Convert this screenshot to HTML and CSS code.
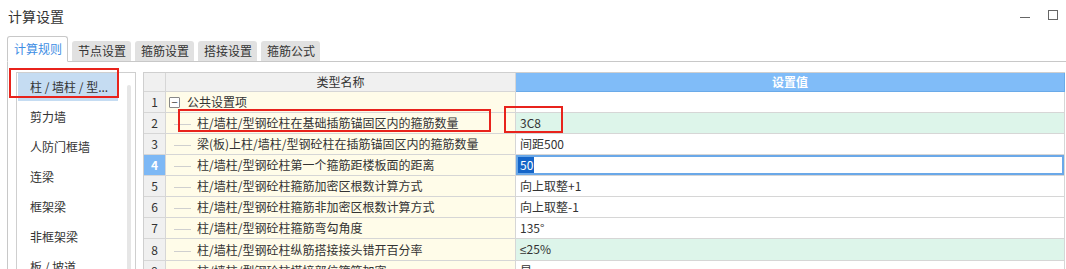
FILE: index.html
```html
<!DOCTYPE html>
<html lang="zh-CN">

<head>
  <meta charset="UTF-8">
  <title>计算设置</title>
  <link rel="stylesheet" href="styles.css">
</head>

<body>
  <div class="window">
    <div class="titlebar">
      <span class="title">计算设置</span>
      <div class="win-btns">
        <span class="btn-min"></span>
        <span class="btn-max"></span>
      </div>
    </div>

    <div class="tabs">
      <div class="tab active">计算规则</div>
      <div class="tab">节点设置</div>
      <div class="tab">箍筋设置</div>
      <div class="tab">搭接设置</div>
      <div class="tab">箍筋公式</div>
    </div>

    <div class="tab-pane">
      <div class="side-list">
        <ul class="items">
          <li class="selected">柱 / 墙柱 / 型...</li>
          <li>剪力墙</li>
          <li>人防门框墙</li>
          <li>连梁</li>
          <li>框架梁</li>
          <li>非框架梁</li>
          <li>板 / 坡道</li>
        </ul>
        <div class="scrollbar"><div class="thumb"></div></div>
      </div>

      <table class="grid">
        <colgroup>
          <col class="c-num">
          <col class="c-name">
          <col>
        </colgroup>
        <thead>
          <tr>
            <th class="num"></th>
            <th class="name-head">类型名称</th>
            <th class="value-head">设置值</th>
          </tr>
        </thead>
        <tbody>
          <tr>
            <td class="num">1</td>
            <td class="name"><span class="toggle">−</span>公共设置项</td>
            <td class="value"></td>
          </tr>
          <tr>
            <td class="num">2</td>
            <td class="name"><span class="branch"></span>柱/墙柱/型钢砼柱在基础插筋锚固区内的箍筋数量</td>
            <td class="value green">3C8</td>
          </tr>
          <tr>
            <td class="num">3</td>
            <td class="name"><span class="branch"></span>梁(板)上柱/墙柱/型钢砼柱在插筋锚固区内的箍筋数量</td>
            <td class="value">间距500</td>
          </tr>
          <tr class="current">
            <td class="num">4</td>
            <td class="name"><span class="branch"></span>柱/墙柱/型钢砼柱第一个箍筋距楼板面的距离</td>
            <td class="value editing"><span class="sel">50</span></td>
          </tr>
          <tr>
            <td class="num">5</td>
            <td class="name"><span class="branch"></span>柱/墙柱/型钢砼柱箍筋加密区根数计算方式</td>
            <td class="value">向上取整+1</td>
          </tr>
          <tr>
            <td class="num">6</td>
            <td class="name"><span class="branch"></span>柱/墙柱/型钢砼柱箍筋非加密区根数计算方式</td>
            <td class="value">向上取整-1</td>
          </tr>
          <tr>
            <td class="num">7</td>
            <td class="name"><span class="branch"></span>柱/墙柱/型钢砼柱箍筋弯勾角度</td>
            <td class="value">135°</td>
          </tr>
          <tr>
            <td class="num">8</td>
            <td class="name"><span class="branch"></span>柱/墙柱/型钢砼柱纵筋搭接接头错开百分率</td>
            <td class="value green"><span class="sym">≤</span>25%</td>
          </tr>
          <tr>
            <td class="num">9</td>
            <td class="name"><span class="branch"></span>柱/墙柱/型钢砼柱搭接部位箍筋加密</td>
            <td class="value">是</td>
          </tr>
        </tbody>
      </table>
    </div>

    <!-- red annotation boxes -->
    <div class="mark mark-list"></div>
    <div class="mark mark-name"></div>
    <div class="mark mark-value"></div>
  </div>
</body>

</html>
```

FILE: styles.css
```css
body {
  margin: 0;
  background: #fff;
  font-family: "Noto Sans CJK SC", "Liberation Sans", sans-serif;
  font-size: 12px;
  color: #333;
  overflow: hidden;
}

.window {
  position: relative;
  height: 269px;
  overflow: hidden;
}

/* Title bar */
.titlebar {
  display: flex;
  justify-content: space-between;
  align-items: center;
  height: 33px;
  padding: 0 8px;
}

.title {
  font-size: 14px;
  line-height: 32px;
  margin-top: -1px;
}

.win-btns {
  display: flex;
  align-items: center;
  gap: 18px;
  margin-top: -4px;
}

.btn-min {
  width: 10px;
  height: 1px;
  background: #666;
  margin-top: 6px;
}

.btn-max {
  width: 8px;
  height: 8px;
  border: 1px solid #666;
}

/* Tabs */
.tabs {
  display: flex;
  align-items: flex-end;
  gap: 3px;
  height: 25px;
  margin: 3px 0 0 7px;
  border-bottom: 1px solid #c8c8c8;
}

.tab {
  height: 20px;
  line-height: 20px;
  padding: 0 5px 0 6px;
  background: #e1e1e1;
  border-radius: 3px 3px 0 0;
  color: #333;
  margin-left: 1px;
}

.tab.active {
  height: 24px;
  line-height: 24px;
  background: #fff;
  color: #3e8ee4;
  border: 1px solid #c8c8c8;
  border-bottom-color: #fff;
  margin: 0 0 -1px 0;
}

/* Tab content */
.tab-pane {
  display: flex;
  align-items: flex-start;
  gap: 7px;
  margin-left: 7px;
  padding: 10px 0 0 8px;
  border-left: 1px solid #c8c8c8;
  height: 300px;
}

.side-list {
  display: flex;
  width: 118px;
  height: 260px;
  border: 1px solid #cfcfcf;
  flex-shrink: 0;
}

.items {
  list-style: none;
  margin: 0;
  padding: 0 0 0 1px;
  width: 108px;
}

.items li {
  height: 28px;
  line-height: 28px;
  margin-bottom: 2px;
  padding-left: 12px;
  width: 88px;
  white-space: nowrap;
}

.items li.selected {
  background: #c5dcf2;
}

.scrollbar {
  padding-top: 12px;
  margin-left: 1px;
}

.thumb {
  width: 4px;
  height: 240px;
  background: #e6e6e6;
  border-radius: 2px;
}

/* Grid */
.grid {
  width: 922px;
  table-layout: fixed;
  border-collapse: separate;
  border-spacing: 0;
  border-top: 1px solid #cfcfcf;
  border-left: 1px solid #cfcfcf;
  flex-shrink: 0;
}

.c-num {
  width: 22px;
}

.c-name {
  width: 350px;
}

.grid th,
.grid td {
  padding: 0;
  border-right: 1px solid #d6d6d6;
  border-bottom: 1px solid #d6d6d6;
  white-space: nowrap;
  overflow: hidden;
}

.grid th {
  height: 18px;
  line-height: 18px;
  font-weight: normal;
  background: #f0f0f0;
}

.grid th.value-head {
  background: #80bcf8;
  color: #fff;
  font-weight: bold;
  border-color: #6aaae8;
}

.grid td {
  height: 20px;
  line-height: 20px;
}

.grid td.num {
  background: #f0f0f0;
  text-align: center;
}

.grid tr.current td.num {
  background: #7db8f5;
  color: #fff;
  font-weight: bold;
}

.grid td.name {
  background: #fffce9;
  padding-left: 3px;
}

.toggle {
  display: inline-block;
  width: 9px;
  height: 9px;
  line-height: 8px;
  border: 1px solid #888;
  border-radius: 1px;
  text-align: center;
  font-size: 11px;
  color: #444;
  vertical-align: middle;
  margin: -2px 7px 0 0;
  background: #fff;
}

.branch {
  display: inline-block;
  width: 17px;
  height: 1px;
  background: #cfcfcf;
  vertical-align: middle;
  margin: 0 6px 0 5px;
}

.grid td.value {
  padding-left: 4px;
  background: #fff;
}

.grid td.value.green {
  background: #ddf5ea;
}

.grid td.value.editing {
  box-shadow: inset 0 0 0 2px #6aa8e8;
  padding-left: 2px;
}

.sym {
  font-family: "Liberation Sans", sans-serif;
}

.sel {
  background: #1565c8;
  color: #fff;
  padding: 0 1px 0 2px;
  line-height: 16px;
  display: inline-block;
}

/* Red annotation boxes */
.mark {
  position: absolute;
  border: 2px solid #e8231c;
  box-sizing: border-box;
}

.mark-list {
  left: 9px;
  top: 68px;
  width: 110px;
  height: 30px;
}

.mark-name {
  left: 178px;
  top: 109px;
  width: 313px;
  height: 23px;
}

.mark-value {
  left: 504px;
  top: 106px;
  width: 59px;
  height: 27px;
}
```
